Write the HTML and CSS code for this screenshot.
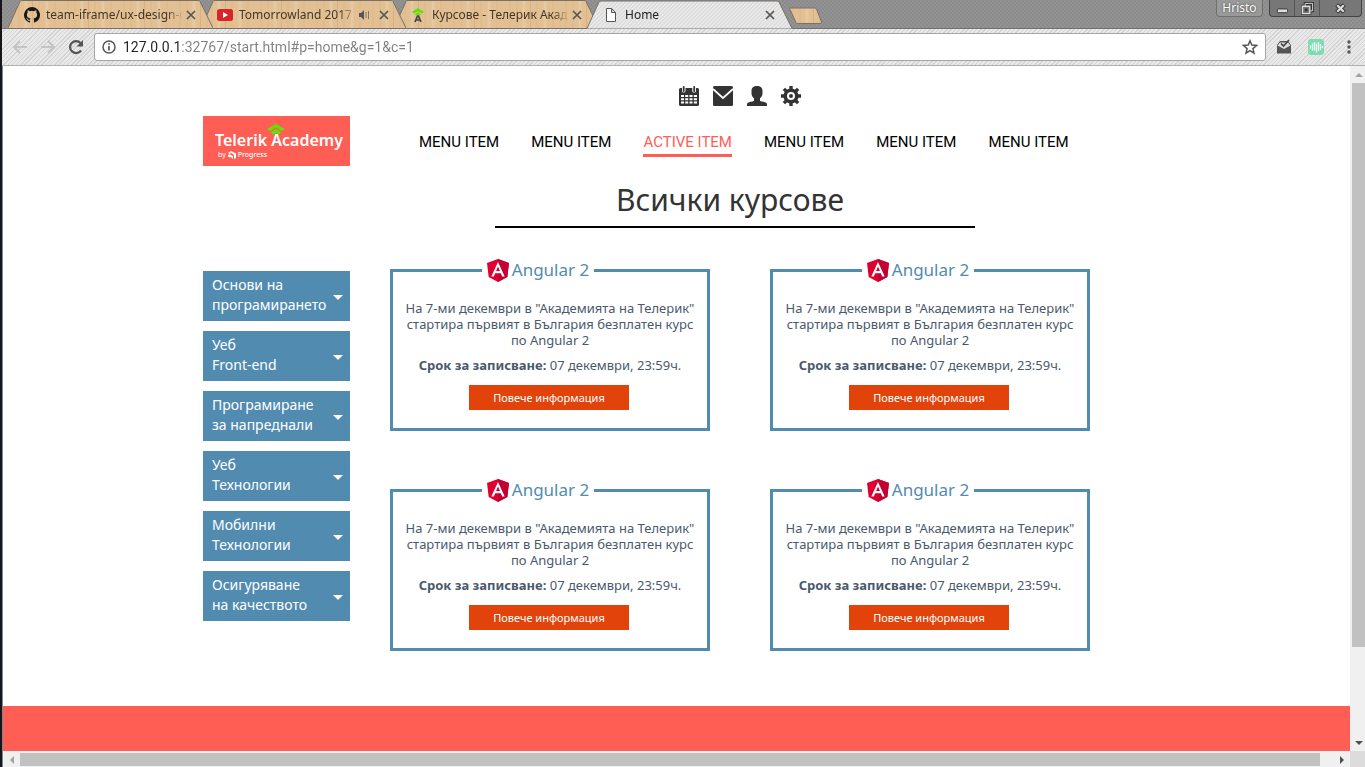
FILE: index.html
```html
<!DOCTYPE html>
<html lang="bg">
<head>
<meta charset="utf-8">
<title>Home</title>
<link rel="stylesheet" href="styles.css">
</head>
<body>
<svg class="defs" aria-hidden="true">
  <defs>
    <pattern id="wood" width="56" height="28" patternUnits="userSpaceOnUse">
      <rect width="56" height="28" fill="#e2c093"/>
      <path d="M4 0v28M11 0v28M31 0v28M47 0v28" stroke="#dcb886"/>
      <path d="M18 0v28M39 0v28" stroke="#e7c9a0" stroke-width="3"/>
      <path d="M24.500 0v28" stroke="#d6b282"/>
    </pattern>
    <pattern id="hatch" width="4" height="4" patternUnits="userSpaceOnUse">
      <rect width="4" height="4" fill="#e9e9e9"/>
      <path d="M-1 1l2-2M0 4l4-4M3 5l2-2" stroke="#d0d0d0"/>
    </pattern>
    <symbol id="tab-shape" viewBox="0 0 205 28"><path d="M0 28 12 1.500Q12.500 .5 14 .5H190Q191.500 .5 192 1.500L205 28"/></symbol>
    <symbol id="cross" viewBox="0 0 16 16"><path d="M4 4l8 8M12 4l-8 8" stroke="#555" stroke-width="1.700"/></symbol>
    <symbol id="angular" viewBox="0 0 22 23">
      <path d="M11 0 22 4 20.300 18 11 23 1.700 18 0 4Z" fill="#dd0031"/>
      <path d="M11 0 22 4 20.300 18 11 23Z" fill="#c3002f"/>
      <path fill-rule="evenodd" d="M11 3 4.300 17.500H6.800L8.200 14.200H13.800L15.200 17.500H17.700ZM11 7.500 12.900 12H9.100Z" fill="#fff"/>
    </symbol>
  </defs>
</svg>
<div class="window">
  <header class="tabstrip">
    <div class="tabs">
      <div class="tab tab-1">
        <svg class="tab-bg"><use href="#tab-shape"/></svg>
        <svg class="favicon" viewBox="0 0 16 16"><path fill="#191717" d="M8 0a8 8 0 0 0-2.530 15.590c.4.070.55-.17.550-.38v-1.490c-2.230.48-2.700-.95-2.700-.95-.36-.92-.89-1.170-.89-1.170-.73-.5.050-.49.050-.49.810.060 1.230.83 1.230.83.72 1.230 1.880.87 2.340.67.070-.52.280-.87.510-1.070-1.780-.2-3.640-.89-3.640-3.950 0-.87.310-1.590.82-2.150-.08-.2-.36-1.020.080-2.120 0 0 .67-.21 2.200.82a7.500 7.500 0 0 1 4 0c1.530-1.040 2.200-.82 2.200-.82.44 1.100.16 1.920.080 2.120.51.56.82 1.270.82 2.150 0 3.070-1.870 3.750-3.650 3.950.29.25.54.73.54 1.480v2.190c0 .21.150.46.550.38A8 8 0 0 0 8 0Z"/></svg>
        <span class="tab-title">team-iframe/ux-design-c</span>
        <button class="tab-close" aria-label="Close tab"><svg viewBox="0 0 16 16"><use href="#cross"/></svg></button>
      </div>
      <div class="tab tab-2">
        <svg class="tab-bg"><use href="#tab-shape"/></svg>
        <svg class="favicon" viewBox="0 0 16 16"><rect y="2" width="16" height="12" rx="2.500" fill="#d9252a"/><path d="M6 5l5 3-5 3Z" fill="#fff"/></svg>
        <span class="tab-title">Tomorrowland 2017 B</span>
        <svg class="sound" viewBox="0 0 12 12"><path d="M1 4h2l3-3v10L3 8H1Z" fill="#555"/><path d="M8 3v6M10.500 2v8" stroke="#777"/></svg>
        <button class="tab-close" aria-label="Close tab"><svg viewBox="0 0 16 16"><use href="#cross"/></svg></button>
      </div>
      <div class="tab tab-3">
        <svg class="tab-bg"><use href="#tab-shape"/></svg>
        <svg class="favicon" viewBox="0 0 16 16"><path d="M2 5l6-4 6 4-2 1.500-4-2-4 2ZM5 7.500l3-2 3 2-1 1-2-1-2 1Z" fill="#5ce500"/><path d="M5 15l2.500-6h1L11 15M6 13h4" fill="none" stroke="#444" stroke-width="1.700"/></svg>
        <span class="tab-title">Курсове - Телерик Акад</span>
        <button class="tab-close" aria-label="Close tab"><svg viewBox="0 0 16 16"><use href="#cross"/></svg></button>
      </div>
      <div class="tab tab-active">
        <svg class="tab-bg"><use href="#tab-shape"/></svg>
        <svg class="favicon" viewBox="0 0 16 16"><path d="M3.500 1.500h5l4 4v9h-9ZM8.500 1.500v4h4" fill="#fff" stroke="#555"/></svg>
        <span class="tab-title">Home</span>
        <button class="tab-close" aria-label="Close tab"><svg viewBox="0 0 16 16"><use href="#cross"/></svg></button>
      </div>
      <button class="new-tab" aria-label="New tab"><svg viewBox="0 0 34 18"><path d="M1.500 1h24q1.500 0 2 1l5 13q.5 1.500-1 1.500H9q-1.500 0-2-1L1 2.500Q.5 1 1.500 1Z" fill="url(#wood)" stroke="#77706a"/></svg></button>
    </div>
    <button class="profile">Hristo</button>
    <div class="window-buttons">
      <button aria-label="Minimize"><svg viewBox="0 0 14 14"><rect x="1.500" y="7.500" width="11" height="4" rx="1" fill="#ddd" stroke="#333"/></svg></button>
      <button aria-label="Restore"><svg viewBox="0 0 14 14"><path d="M4.500 1.500h8v8h-8ZM1.500 4.500h8v8h-8Z" fill="none" stroke="#333" stroke-width="3"/><path d="M4.500 1.500h8v8h-8Z" fill="none" stroke="#ddd"/><path d="M1.500 4.500h8v8h-8Z" fill="#777" stroke="#ddd" stroke-width="1.500"/><path d="M4 7h3v3H4Z" fill="#333"/></svg></button>
      <button aria-label="Close"><svg viewBox="0 0 14 14"><path d="M3 3l8 8M11 3l-8 8" stroke="#333" stroke-width="4.500"/><path d="M3.500 3.500l7 7M10.500 3.500l-7 7" stroke="#ddd" stroke-width="2.500"/></svg></button>
    </div>
  </header>
  <div class="toolbar">
    <button class="tool" aria-label="Back"><svg viewBox="0 0 16 16"><path d="M15 8H2M8 2 2 8l6 6" fill="none" stroke="#c4c4c4" stroke-width="2"/></svg></button>
    <button class="tool" aria-label="Forward"><svg viewBox="0 0 16 16"><path d="M1 8h13M8 2l6 6-6 6" fill="none" stroke="#c4c4c4" stroke-width="2"/></svg></button>
    <button class="tool" aria-label="Reload"><svg viewBox="0 0 16 16"><path d="M13 11.500A6 6 0 1 1 12.500 4" fill="none" stroke="#555" stroke-width="2.200"/><path d="M15 1v6.500H8.500Z" fill="#555"/></svg></button>
    <div class="omnibox">
      <svg class="info" viewBox="0 0 14 14"><circle cx="7" cy="7" r="6" fill="none" stroke="#555" stroke-width="1.500"/><path d="M7 6v4.500M7 3.300v1.500" stroke="#555" stroke-width="1.700"/></svg>
      <input class="address" type="text" aria-label="Address" value="127.0.0.1:32767/start.html#p=home&amp;g=1&amp;c=1">
      <button class="star" aria-label="Bookmark"><svg viewBox="0 0 16 16"><path d="M8 1.800l1.800 4.300 4.700.4-3.600 3.100 1.100 4.600-4-2.500-4 2.500 1.100-4.600L1.500 6.500l4.700-.4Z" fill="none" stroke="#555" stroke-width="1.500"/></svg></button>
    </div>
    <button class="tool inbox" aria-label="Inbox"><svg viewBox="0 0 16 16"><path d="M1 6l3-4h8l3 4v8.500H1Z" fill="#555"/><path d="M1.500 6.500 8 10l6.500-3.500L12 3.500H4Z" fill="#ddd"/><path d="M5 4.500l2.500 2.500L13 1" fill="none" stroke="#444" stroke-width="1.700"/></svg></button>
    <button class="tool audio" aria-label="Audio extension"><svg viewBox="0 0 16 16"><rect width="16" height="16" rx="3" fill="#7fdcb2"/><path d="M2.500 6.500v3M4.500 4.500v7M6.500 3v8.500M8.500 4.500v9M10.500 3v9M12.500 5v6M14.500 7v2" stroke="#e9fff5" stroke-width="1.300"/></svg></button>
    <button class="tool more" aria-label="Menu"><svg viewBox="0 0 16 16"><g fill="#555"><circle cx="8" cy="3" r="1.700"/><circle cx="8" cy="8" r="1.700"/><circle cx="8" cy="13" r="1.700"/></g></svg></button>
  </div>
  <div class="viewport">
    <div class="page">
      <div class="layout">
        <a class="logo" href="#home" aria-label="Telerik Academy by Progress">
          <svg class="logo-mark" viewBox="0 0 18 12"><path d="M9 0l9 5-3 2-6-3.500L3 7 0 5ZM9 5l5 3-1.500 2.500h-1L9 9l-2.500 1.500h-1L4 8Z" fill="#5ce500"/></svg>
          <span class="logo-name">Telerik Academy</span>
          <span class="logo-by"><span>by</span><svg viewBox="0 0 8 8"><path d="M0 2l3-2 5 2.500V7L6 8V3.700L3 2 1.500 3ZM0 4l1.500-.8L5 5v3L3.500 7V5.800L2 6.500 0 5.500Z" fill="#fff"/></svg><b>Progress</b></span>
        </a>
        <div class="top">
          <div class="quick">
            <a href="#calendar" aria-label="Calendar"><svg viewBox="0 0 20 20"><path fill="#333" fill-rule="evenodd" d="M0 3.500Q0 2 1.500 2H3v3q0 1.500 1.700 1.500T6.500 5V2h6.800v3q0 1.500 1.800 1.500T17 5V2h1.500Q20 2 20 3.500v15q0 1.500-1.500 1.500h-17Q0 20 0 18.500ZM2 9v2h3V9Zm4.200 0v2h3V9Zm4.300 0v2h3V9Zm4.300 0v2H18V9ZM2 12.300v2h3v-2Zm4.200 0v2h3v-2Zm4.300 0v2h3v-2Zm4.300 0v2H18v-2ZM2 15.600v2h3v-2Zm4.200 0v2h3v-2Zm4.300 0v2h3v-2Zm4.300 0v2H18v-2Z"/><path d="M4.700 1V5M15.200 1V5" stroke="#333" stroke-width="1.800" stroke-linecap="round"/></svg></a>
            <a href="#mail" aria-label="Mail"><svg viewBox="0 0 20 20"><rect width="20" height="20" rx="1.500" fill="#333"/><path d="M0 3l10 9 10-9" fill="none" stroke="#fff" stroke-width="1.700"/></svg></a>
            <a href="#profile" aria-label="Profile"><svg viewBox="0 0 20 20"><path fill="#333" d="M10 0c3.500 0 5.500 1.500 5.500 5v2c0 2.500-1 4-2.500 5.500v2.300c1.500 1 5 1.200 6.500 2.200.5.500.5 1.500.5 3H0c0-1.500 0-2.500.5-3 1.500-1 5-1.200 6.500-2.200v-2.300C5.500 11 4.500 9.500 4.500 7V5c0-3.500 2-5 5.500-5Z"/></svg></a>
            <a href="#settings" aria-label="Settings"><svg viewBox="0 0 20 20"><circle cx="10" cy="10" r="5.800" fill="none" stroke="#333" stroke-width="3.600"/><circle cx="10" cy="10" r="2" fill="#333"/><path d="M10 0v3.500M10 16.500V20M0 10h3.500M16.500 10H20M2.900 2.900l2.500 2.500M14.600 14.600l2.500 2.500M2.900 17.100l2.500-2.500M14.600 5.400l2.500-2.500" stroke="#333" stroke-width="3.400"/></svg></a>
          </div>
          <nav class="menu">
            <a href="#1">MENU ITEM</a>
            <a href="#2">MENU ITEM</a>
            <a class="active" href="#3">ACTIVE ITEM</a>
            <a href="#4">MENU ITEM</a>
            <a href="#5">MENU ITEM</a>
            <a href="#6">MENU ITEM</a>
          </nav>
        </div>
        <aside class="sidebar">
          <button>Основи на<br>програмирането</button>
          <button>Уеб<br>Front-end</button>
          <button>Програмиране<br>за напреднали</button>
          <button>Уеб<br>Технологии</button>
          <button>Мобилни<br>Технологии</button>
          <button>Осигуряване<br>на качеството</button>
        </aside>
        <main>
          <h1>Всички курсове</h1>
          <div class="cards">
            <article class="card">
              <h2><svg viewBox="0 0 22 23"><use href="#angular"/></svg>Angular 2</h2>
              <p>На 7-ми декември в "Академията на Телерик"<br>стартира първият в България безплатен курс<br>по Angular 2</p>
              <p><b>Срок за записване:</b> 07 декември, 23:59ч.</p>
              <button>Повече информация</button>
            </article>
            <article class="card">
              <h2><svg viewBox="0 0 22 23"><use href="#angular"/></svg>Angular 2</h2>
              <p>На 7-ми декември в "Академията на Телерик"<br>стартира първият в България безплатен курс<br>по Angular 2</p>
              <p><b>Срок за записване:</b> 07 декември, 23:59ч.</p>
              <button>Повече информация</button>
            </article>
            <article class="card">
              <h2><svg viewBox="0 0 22 23"><use href="#angular"/></svg>Angular 2</h2>
              <p>На 7-ми декември в "Академията на Телерик"<br>стартира първият в България безплатен курс<br>по Angular 2</p>
              <p><b>Срок за записване:</b> 07 декември, 23:59ч.</p>
              <button>Повече информация</button>
            </article>
            <article class="card">
              <h2><svg viewBox="0 0 22 23"><use href="#angular"/></svg>Angular 2</h2>
              <p>На 7-ми декември в "Академията на Телерик"<br>стартира първият в България безплатен курс<br>по Angular 2</p>
              <p><b>Срок за записване:</b> 07 декември, 23:59ч.</p>
              <button>Повече информация</button>
            </article>
          </div>
        </main>
      </div>
      <footer class="footer"></footer>
    </div>
    <div class="vscroll">
      <button aria-label="Scroll up"><svg viewBox="0 0 8 8"><path d="M0 6l4-4 4 4Z" fill="#a3a3a3"/></svg></button>
      <div class="vthumb"></div>
      <button aria-label="Scroll down"><svg viewBox="0 0 8 8"><path d="M0 2l4 4 4-4Z" fill="#505050"/></svg></button>
    </div>
    <div class="hscroll">
      <button aria-label="Scroll left"><svg viewBox="0 0 8 8"><path d="M6 0 2 4l4 4Z" fill="#a3a3a3"/></svg></button>
      <div class="hthumb"></div>
      <button aria-label="Scroll right"><svg viewBox="0 0 8 8"><path d="M2 0l4 4-4 4Z" fill="#505050"/></svg></button>
    </div>
    <div class="corner"></div>
  </div>
</div>
</body>
</html>
```
FILE: styles.css
```css
* { box-sizing: border-box; }
body { margin: 0; font-family: "Noto Sans", "Open Sans", sans-serif; background: #fff; }
button { border: 0; margin: 0; padding: 0; background: none; font: inherit; color: inherit; }
svg { display: block; }
.defs { position: absolute; width: 0; height: 0; }

.window {
  display: flex;
  flex-direction: column;
  height: 100vh;
  border-left: 2px solid #15151a;
  overflow: hidden;
}

/* Tab strip */
.tabstrip {
  display: flex;
  height: 29px;
  padding-left: 6px;
  border-bottom: 1px solid #77706f;
  background: repeating-conic-gradient(#939393 0 25%, #8b8b8b 0 50%) 0 0 / 4px 4px;
}
.tabs { display: flex; flex: 1; min-width: 0; }
.tab {
  position: relative;
  display: flex;
  align-items: center;
  flex: 0 0 205px;
  min-width: 0;
  height: 29px;
  margin-right: -12px;
  padding: 1px 14px 0 16px;
  font-size: 12px;
  color: #42372a;
}
.tab-1 { z-index: 3; }
.tab-2 { z-index: 2; }
.tab-3 { z-index: 1; }
.tab-active { z-index: 4; color: #222; }
.tab-bg {
  position: absolute;
  left: 0;
  top: 0;
  width: 205px;
  height: 28px;
  fill: url(#wood);
  stroke: #77706a;
  z-index: -1;
}
.tab-active .tab-bg { fill: url(#hatch); height: 29px; }
.favicon { flex: none; width: 16px; height: 16px; margin-right: 6px; }
.tab-title {
  flex: 1;
  min-width: 0;
  white-space: nowrap;
  line-height: 18px;
  -webkit-mask-image: linear-gradient(90deg, #000 calc(100% - 16px), transparent);
  mask-image: linear-gradient(90deg, #000 calc(100% - 16px), transparent);
}
.sound { flex: none; width: 12px; height: 12px; margin-left: 2px; }
.tab-close { flex: none; width: 16px; height: 16px; }
.sound + .tab-close { margin-left: 6px; }
.new-tab { width: 34px; height: 18px; margin: 7px 0 0 9px; }
.profile {
  width: 47px;
  height: 17px;
  margin-right: 6px;
  border: 1px solid #707070;
  border-top: 0;
  border-radius: 0 0 4px 4px;
  background: #999;
  color: #fff;
  font-size: 12px;
  line-height: 16px;
  text-shadow: 0 0 2px #333;
}
.window-buttons {
  display: flex;
  height: 17px;
  margin-right: 3px;
  border: 1px solid #444;
  border-top: 0;
  border-radius: 0 0 4px 4px;
  background: #777;
}
.window-buttons button { display: grid; place-items: center; width: 25px; border-right: 1px solid #555; }
.window-buttons button:last-child { width: 41px; border: 0; }
.window-buttons svg { width: 13px; height: 13px; }

/* Toolbar */
.toolbar {
  display: flex;
  align-items: center;
  height: 37px;
  padding: 0 8px 0 10px;
  border-bottom: 1px solid #b0b0b0;
  background: repeating-linear-gradient(135deg, #e9e9e9 0 2px, #d4d4d4 2px 3px);
}
.tool { flex: none; width: 16px; height: 16px; margin-right: 12px; }
.tool:nth-child(3) { margin-right: 10px; }
.inbox { margin-right: 16px; }
.audio { margin-right: 17px; }
.more { margin-right: 0; }
.omnibox {
  display: flex;
  align-items: center;
  flex: 1;
  height: 28px;
  margin-right: 10px;
  padding: 0 7px;
  border: 1px solid #a5a5a5;
  border-radius: 3px;
  background: #fff;
}
.info { width: 14px; height: 14px; }
.address {
  flex: 1;
  min-width: 0;
  padding: 0;
  margin-left: 7px;
  border: 0;
  outline: 0;
  font: 14px/20px Roboto, sans-serif;
  color: transparent;
  background: linear-gradient(90deg, #222 57px, #808080 57px);
  -webkit-background-clip: text;
  background-clip: text;
}
.star { width: 16px; height: 16px; }

/* Viewport and scroll bars */
.viewport {
  flex: 1;
  min-height: 0;
  display: grid;
  grid-template: 1fr 16px / 1fr 15px;
  border-left: 1px solid #7f8a94;
}
.page { display: flex; flex-direction: column; overflow: hidden; background: #fff; }
.vscroll, .hscroll { display: flex; background: #f0f0f0; }
.vscroll { flex-direction: column; }
.vscroll button, .hscroll button { display: grid; place-items: center; flex: none; width: 17px; height: 17px; }
.vscroll svg, .hscroll svg { width: 8px; height: 8px; }
.vthumb { flex: 0 1 564px; margin: 0 0 auto 2px; background: #c1c1c1; min-height: 20px; }
.hthumb { flex: 1; margin: 2px 13px 1px 0; background: #c1c1c1; }
.corner { background: #dcdcdc; }

/* Page */
.layout {
  display: grid;
  grid-template-columns: 147px minmax(0, 700px);
  column-gap: 40px;
  padding: 20px 20px 20px 200px;
}
.logo {
  position: relative;
  height: 50px;
  margin-top: 30px;
  padding: 13px 0 0 12px;
  background: #ff5e55;
  color: #fff;
  text-decoration: none;
}
.logo-mark { position: absolute; left: 64px; top: 8px; width: 18px; height: 12px; }
.logo-name { display: block; font: 600 16px/22px "Noto Sans", sans-serif; white-space: nowrap; }
.logo-by { display: flex; align-items: center; gap: 2px; padding-left: 3px; font-size: 7px; line-height: 8px; }
.logo-by svg { width: 8px; height: 8px; }
.logo-by b { font-weight: 500; }
.quick { display: flex; justify-content: center; gap: 14px; }
.quick a, .quick svg { display: block; width: 20px; height: 20px; }
.menu { display: flex; gap: 32px; margin: 26px 0 0 29px; font: 400 15px/20px Roboto, sans-serif; }
.menu a { padding-bottom: 2px; border-bottom: 3px solid transparent; color: #000; text-decoration: none; white-space: nowrap; }
.menu .active { color: #ff5e55; border-color: #ff5e55; }

.sidebar { display: flex; flex-direction: column; gap: 10px; margin-top: 105px; }
.sidebar button {
  display: block;
  position: relative;
  height: 50px;
  padding: 0 0 2px 9px;
  background: #518bb0;
  color: #fff;
  font-size: 14px;
  line-height: 20px;
  text-align: left;
}
.sidebar button::after {
  content: "";
  position: absolute;
  right: 7px;
  top: 24px;
  border: 5px solid transparent;
  border-top-color: #fff;
  border-bottom: 0;
}
h1 {
  max-width: 480px;
  margin: 14px auto 41px 105px;
  padding: 0 10px 6px 0;
  border-bottom: 2px solid #000;
  color: #333;
  font-size: 30px;
  font-weight: 400;
  line-height: 40px;
  text-align: center;
}
.cards { display: grid; grid-template-columns: 1fr 1fr; gap: 58px 60px; }
.card {
  display: flex;
  flex-direction: column;
  align-items: center;
  min-height: 162px;
  border: 3px solid #518bb0;
  color: #4a5a6c;
  font-size: 13px;
  line-height: 16px;
  text-align: center;
}
.card h2 {
  display: flex;
  align-items: center;
  gap: 3px;
  margin: -14px 24px 18px 0;
  padding: 0 5px;
  background: #fff;
  color: #518bb0;
  font-size: 17px;
  font-weight: 400;
  line-height: 24px;
}
.card h2 svg { width: 22px; height: 23px; }
.card p { margin: 0 0 9px; white-space: nowrap; }
.card button { width: 160px; height: 25px; margin: 3px 2px 0 0; background: #e2430b; color: #fff; font-size: 11px; }
.footer { flex: none; height: 45px; margin-top: auto; background: #ff5e55; }
```
